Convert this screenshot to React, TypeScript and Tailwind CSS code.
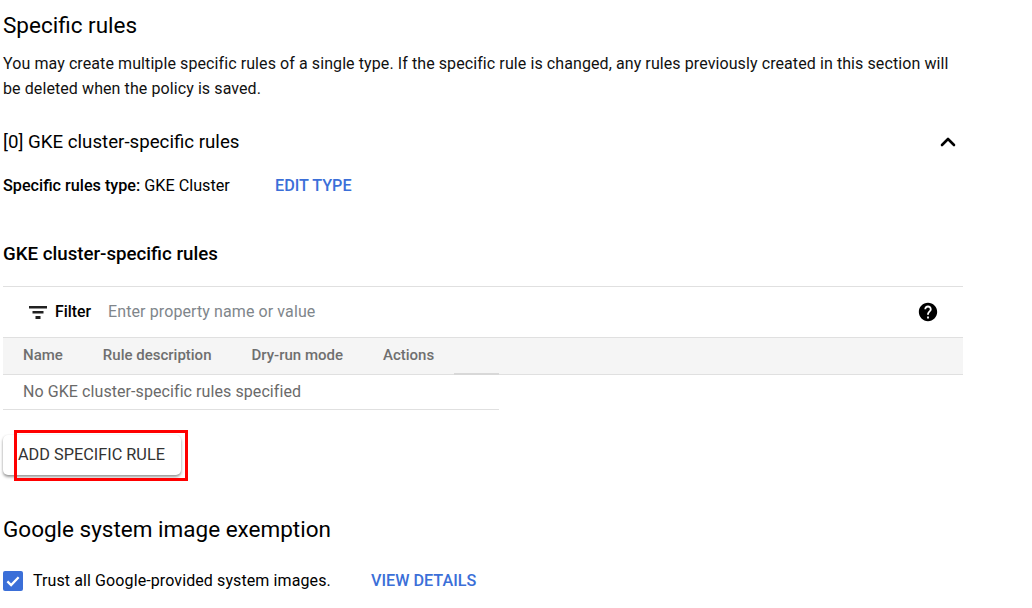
import { ChevronUp } from 'lucide-react';

export default function App() {
  return (
    <div className="w-[1032px] h-[608px] overflow-hidden bg-white pl-[3px] font-['Roboto',sans-serif] text-[#000000]">
      <div className="w-[960px]">
        <h1 className="pt-[10px] text-[22.5px] leading-[30px]">Specific rules</h1>
        <p className="mt-[11px] text-[16px] leading-[25px] tracking-[0.09px] text-[#111111]">
          You may create multiple specific rules of a single type. If the specific rule is changed, any rules previously created in this section will be deleted when the policy is saved.
        </p>

        <div className="mt-[26px] flex items-center justify-between h-[30px]">
          <h2 className="text-[18.7px] leading-[30px]">[0] GKE cluster-specific rules</h2>
          <ChevronUp className="mr-[3px] size-[24px]" strokeWidth={2.6} />
        </div>
        <div className="mt-[20px] flex h-[17px] items-center text-[16.2px] leading-[17px]">
          <span className="w-[272px]"><span className="font-medium">Specific rules type:</span> GKE Cluster</span>
          <span className="font-medium text-[#3b6fd8]">EDIT TYPE</span>
        </div>

        <h2 className="mt-[48px] text-[18.7px] leading-[24px] font-medium">GKE cluster-specific rules</h2>

        <div className="mt-[20px] flex h-[51px] items-center border-t border-[#e0e0e0] pl-[23px] pr-[24px]">
          <svg className="size-[24px]" viewBox="0 0 24 24" fill="#212121"><path d="M3 6h18v2.5H3zM6.5 11h11v2.5h-11zM9.5 16h5v3h-5z" /></svg>
          <span className="ml-[5px] text-[15.8px] font-medium">Filter</span>
          <span className="ml-[17px] text-[16px] tracking-[0.1px] text-[#80868b]">Enter property name or value</span>
          <svg className="ml-auto size-[22px]" viewBox="0 0 24 24" fill="#000000"><path d="M12 2C6.48 2 2 6.48 2 12s4.48 10 10 10 10-4.48 10-10S17.52 2 12 2zm1 17h-2v-2h2v2zm2.07-7.75-.9.92C13.45 12.9 13 13.5 13 15h-2v-.5c0-1.1.45-2.1 1.17-2.83l1.24-1.26c.37-.36.59-.86.59-1.41 0-1.1-.9-2-2-2s-2 .9-2 2H8c0-2.21 1.79-4 4-4s4 1.79 4 4c0 .88-.36 1.68-.93 2.25z" /></svg>
        </div>

        <div className="relative flex h-[38px] items-center gap-[40px] border-y border-[#e0e0e0] bg-[#f5f5f5] pb-[2px] pl-[20px] text-[15px] font-medium text-[#6f6f6f]">
          <span>Name</span>
          <span>Rule description</span>
          <span>Dry-run mode</span>
          <span>Actions</span>
          <div className="absolute left-[451px] bottom-[-1px] h-[2px] w-[45px] bg-[#d8d8d8]" />
        </div>
        <div className="flex h-[35px] w-[496px] items-center border-b border-[#e0e0e0] pl-[20px] text-[16px] tracking-[0.08px] text-[#6a6a6a]">
          No GKE cluster-specific rules specified
        </div>

        <div className="relative mt-[25px] w-fit">
          <button className="flex h-[40px] w-[178px] items-center rounded-[5px] bg-white pl-[15px] text-[16.3px] font-normal text-[#333333] shadow-[0_2px_3px_rgba(0,0,0,0.4),0_0_2px_rgba(0,0,0,0.08)]">
            ADD SPECIFIC RULE
          </button>
          <div className="absolute left-[11px] top-[-5px] h-[51px] w-[174px] border-[3px] border-[#ff0000]" />
        </div>

        <h2 className="mt-[39px] text-[22.5px] leading-[30px]">Google system image exemption</h2>

        <div className="mt-[26px] flex h-[22px] items-center text-[16px] leading-[22px]">
          <span className="flex size-[20px] items-center justify-center rounded-[2px] bg-[#3b6fd8]">
            <svg className="size-[18px]" viewBox="0 0 24 24" fill="none" stroke="white" strokeWidth="3"><path d="M4.5 12.5l5 5 10-10.5" /></svg>
          </span>
          <span className="ml-[10px] w-[338px] tracking-[0.1px]">Trust all Google-provided system images.</span>
          <span className="text-[16.2px] font-medium text-[#3b6fd8]">VIEW DETAILS</span>
        </div>
      </div>
    </div>
  );
}
